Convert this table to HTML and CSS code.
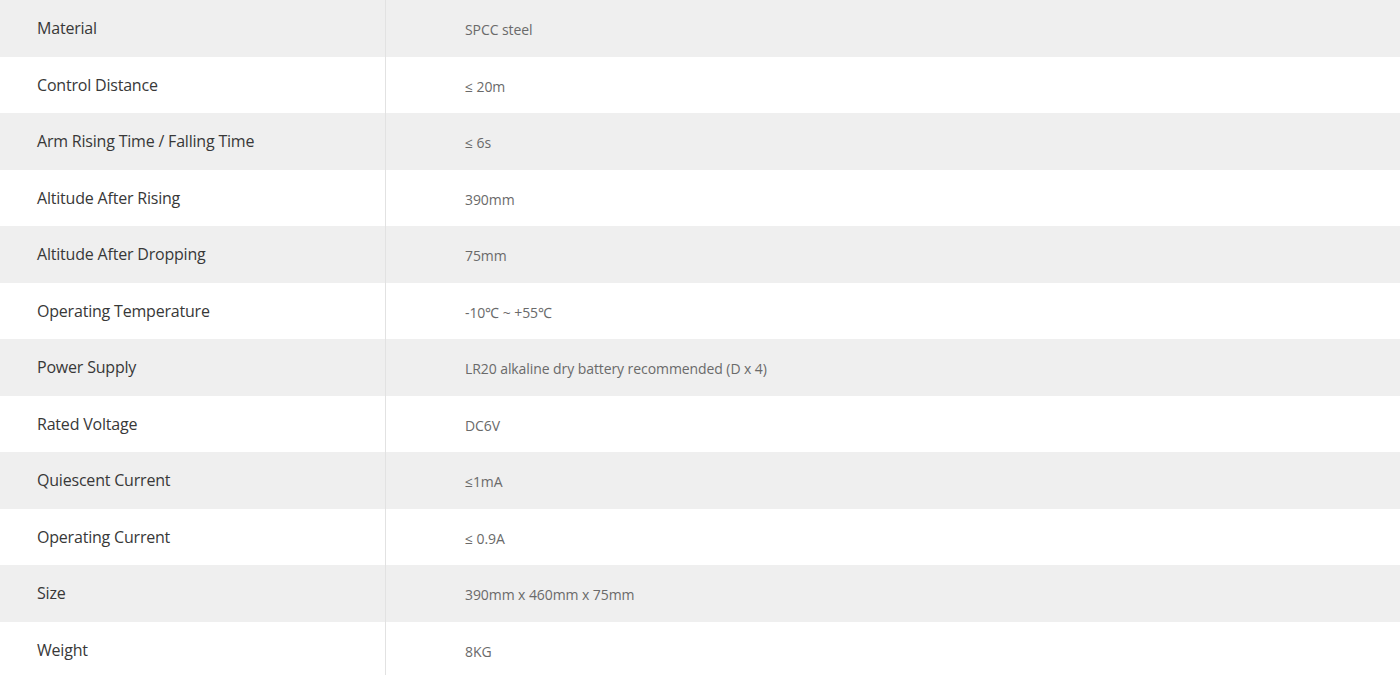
FILE: index.html
```html
<!DOCTYPE html>
<html>
<head>
<meta charset="utf-8">
<link rel="stylesheet" href="styles.css">
</head>
<body>
<table class="spec">
<tbody>
<tr><th>Material</th><td>SPCC steel</td></tr>
<tr><th>Control Distance</th><td>≤ 20m</td></tr>
<tr><th>Arm Rising Time / Falling Time</th><td>≤ 6s</td></tr>
<tr><th>Altitude After Rising</th><td>390mm</td></tr>
<tr><th>Altitude After Dropping</th><td>75mm</td></tr>
<tr><th>Operating Temperature</th><td>-10℃ ~ +55℃</td></tr>
<tr><th>Power Supply</th><td>LR20 alkaline dry battery recommended (D x 4)</td></tr>
<tr><th>Rated Voltage</th><td>DC6V</td></tr>
<tr><th>Quiescent Current</th><td>≤1mA</td></tr>
<tr><th>Operating Current</th><td>≤ 0.9A</td></tr>
<tr><th>Size</th><td>390mm x 460mm x 75mm</td></tr>
<tr><th>Weight</th><td>8KG</td></tr>
</tbody>
</table>
</body>
</html>
```
FILE: styles.css
```css
html, body {
  margin: 0;
  padding: 0;
  background: #ffffff;
}
.spec {
  width: 1400px;
  border-collapse: collapse;
  table-layout: fixed;
}
.spec tr {
  height: 56.5px;
}
.spec tr:nth-child(odd) {
  background: #efefef;
}
.spec th {
  width: 348px;
  padding: 0 0 0 37px;
  text-align: left;
  font-family: "Open Sans", sans-serif;
  font-weight: 400;
  font-size: 16px;
  letter-spacing: -0.2px;
  color: #383838;
  border-right: 1px solid #e2e2e2;
  vertical-align: middle;
}
.spec td {
  padding: 3px 0 0 79px;
  font-family: "Open Sans", sans-serif;
  font-weight: 400;
  font-size: 14px;
  letter-spacing: -0.08px;
  color: #6a6a6a;
  vertical-align: middle;
}
```
